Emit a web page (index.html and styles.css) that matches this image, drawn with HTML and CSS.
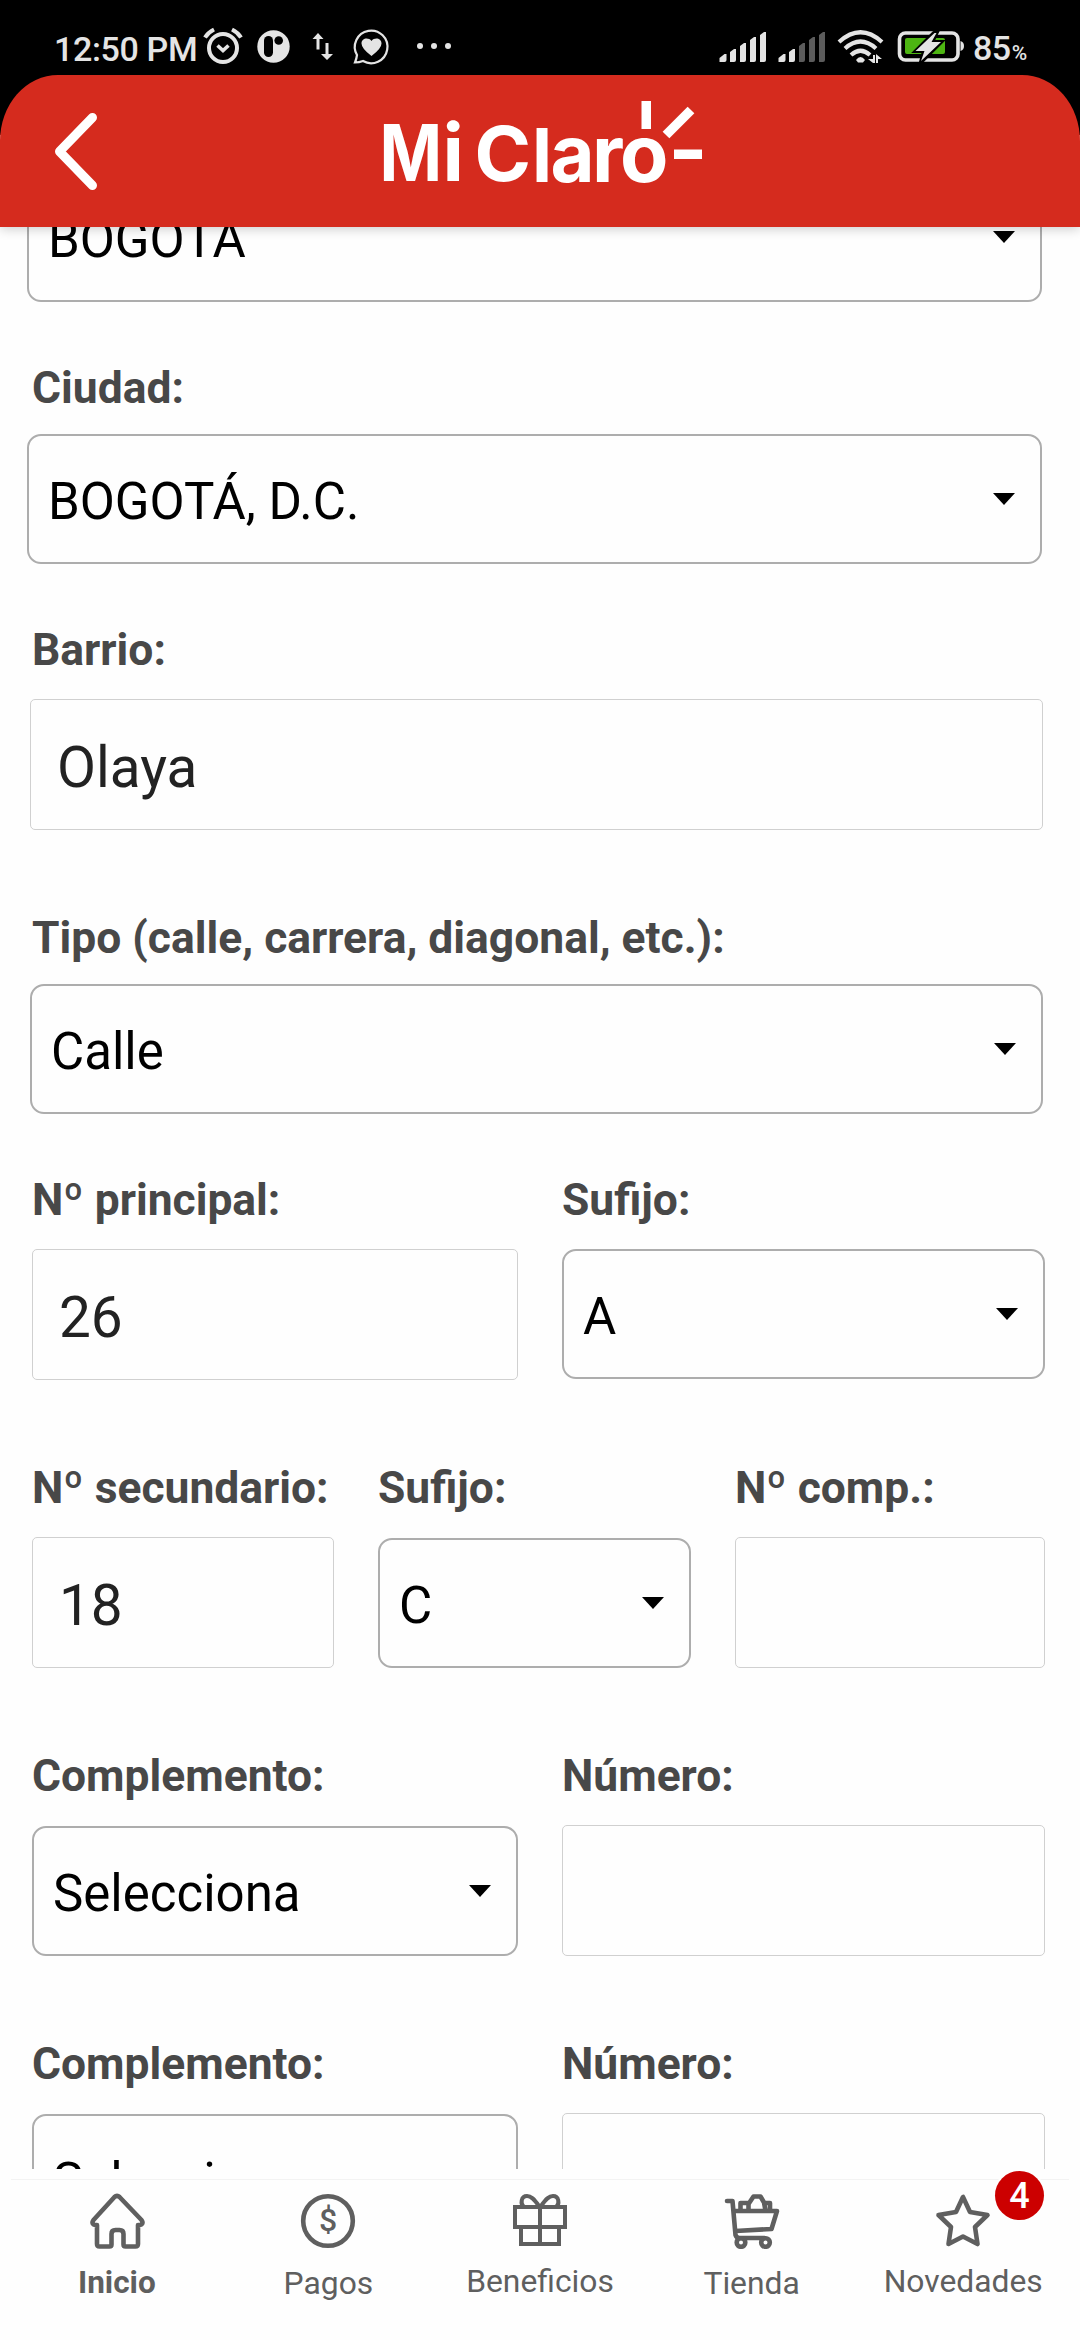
FILE: index.html
```html
<!DOCTYPE html>
<html lang="es">
<head>
<meta charset="utf-8">
<title>Mi Claro</title>
<link rel="stylesheet" href="styles.css">
</head>
<body>
<div class="status">
  <span class="clock">12:50 PM</span>
  <svg class="s-icons" width="260" height="75" viewBox="200 0 260 75" fill="none" stroke="#e4e4e4">
    <circle cx="223" cy="48" r="14" stroke-width="4"/>
    <path d="M217.500 45.500l5.500 5 5.500-5" stroke-width="3.600"/>
    <path d="M205 37.500q3-5 9-8M241 37.500q-3-5-9-8" stroke-width="4"/>
    <ellipse cx="273.500" cy="46.500" rx="16.200" ry="16.300" fill="#e4e4e4" stroke="none"/>
    <rect x="264" y="36" width="9" height="21" rx="4.500" fill="#000" stroke="none"/>
    <circle cx="278.700" cy="40.500" r="4.300" fill="#000" stroke="none"/>
    <path d="M319.500 49.500h-3V39h-4l5.500-6 5.500 6h-4zM325.500 43h3v11h4.500l-6 6-6-6h4.500z" fill="#e4e4e4" stroke="none"/>
    <path d="M357 55a16.300 16.300 0 1 1 6 6q-4 1.500-8 1.500 1.500-3.500 2-7.500z" stroke-width="2.200"/>
    <path d="M371.500 56q-10-7.500-10-12.500c0-5.500 7-6.500 10-2.500 3-4 10-3 10 2.500q0 5-10 12.500z" fill="#e4e4e4" stroke="none"/>
    <g fill="#e4e4e4" stroke="none"><circle cx="420" cy="46" r="3"/><circle cx="434" cy="46" r="3"/><circle cx="448" cy="46" r="3"/></g>
  </svg>
  <svg class="s-right" width="250" height="75" viewBox="718 0 250 75" fill="#e4e4e4">
    <path d="M719.500 62v-4l5-4h2v6q0 2-2 2zM730 62V52l4-3h2v11q0 2-2 2zM740 62V46l4-3h2v17q0 2-2 2zM750 62V40l4-3h2v23q0 2-2 2zM760 62V35l4-3h2v28q0 2-2 2z"/>
    <path d="M778.500 62v-4l5-4h2v6q0 2-2 2zM789 62V52l4-3h2v11q0 2-2 2z"/>
    <path fill="#5c5c5c" d="M799 62V46l4-3h2v17q0 2-2 2zM809 62V40l4-3h2v23q0 2-2 2zM819 62V35l4-3h2v28q0 2-2 2z"/>
    <g fill="none" stroke="#e4e4e4" stroke-width="4.200"><path d="M839 42q21.500-19.500 43 0"/><path d="M845 48.500q15.500-14 31 0"/><path d="M851 55q9.500-8.500 19 0"/></g>
    <path d="M856 60q4.500-6 9 0l-2 2.500h-5z"/>
    <path d="M873 55h2v8h-2l-5-4h5zM878 63h-2v-9l6 5h-4z"/>
    <rect x="899.500" y="33" width="58.500" height="27" rx="6" fill="none" stroke="#e4e4e4" stroke-width="3.600"/>
    <rect x="905" y="38" width="40" height="16" rx="2" fill="#4db512"/>
    <path d="M960.500 41q3.500 1 3.500 5t-3.500 5z"/>
    <path d="M934 33l-18 18h8l-3 11 20-20h-9l5-10z" stroke="#000" stroke-width="4"/>
    <path d="M934.500 33l-19 18h9l-3.500 10 20-19h-9.500l5-9z"/>
  </svg>
  <span class="battery">85<small>%</small></span>
</div>
<header class="header">
  <svg class="back" width="60" height="100" viewBox="46 101 60 100"><path d="M92.500 117.500L59.500 151.500l33 34" fill="none" stroke="#fff" stroke-width="9" stroke-linecap="round" stroke-linejoin="round"/></svg>
  <svg class="logo" width="330" height="120" viewBox="378 97 330 120" fill="#fff">
    <g class="logo-text">
      <text class="mi" transform="translate(379.500 180.500) scale(.850 1)">M</text>
      <text class="mi" x="442.500" y="180.500">i</text>
      <text transform="translate(474.500 181) scale(1.020 1)" font-size="75">C</text>
      <text x="532" y="181.500" font-size="74">l</text>
      <text transform="translate(550.500 181.500) scale(.960 1)" font-size="79">a</text>
      <text x="592" y="181.500" font-size="79">r</text>
      <text transform="translate(620 181.500)" font-size="79">o</text>
    </g>
    <path d="M641.500 101h9.500v28h-9.500zM674 149.500h28v9.500h-28z"/>
    <path d="M666 135l25-25" stroke="#fff" stroke-width="9.500"/>
  </svg>
</header>
<main class="form">
  <section class="row first"><div class="select">BOGOTA</div></section>
  <section class="row city"><div class="field"><label>Ciudad:</label><div class="select">BOGOTÁ, D.C.</div></div></section>
  <section class="row hood"><div class="field"><label>Barrio:</label><div class="input">Olaya</div></div></section>
  <section class="row type"><div class="field"><label>Tipo (calle, carrera, diagonal, etc.):</label><div class="select">Calle</div></div></section>
  <section class="row main-no">
    <div class="field"><label>Nº principal:</label><div class="input">26</div></div>
    <div class="field"><label>Sufijo:</label><div class="select">A</div></div>
  </section>
  <section class="row thirds">
    <div class="field"><label>Nº secundario:</label><div class="input">18</div></div>
    <div class="field"><label>Sufijo:</label><div class="select">C</div></div>
    <div class="field"><label>Nº comp.:</label><div class="input"></div></div>
  </section>
  <section class="row extra">
    <div class="field"><label>Complemento:</label><div class="select">Selecciona</div></div>
    <div class="field"><label>Número:</label><div class="input"></div></div>
  </section>
  <section class="row extra">
    <div class="field"><label>Complemento:</label><div class="select">Selecciona</div></div>
    <div class="field"><label>Número:</label><div class="input"></div></div>
  </section>
</main>
<nav class="tabs">
  <a class="tab active">
    <svg width="56" height="56" viewBox="0 0 56 56"><path d="M25.500 4q2.500-2.500 5 0L52.500 27c2 3 1 5-3 5H49v19q0 2.500-2.500 2.500h-10q-2 0-2-2V41q0-4-4-4h-4q-4 0-4 4v10.500q0 2-2 2h-10Q8 53.500 8 51V32h-.500c-4 0-5-2-3-5z"/></svg>
    <span>Inicio</span>
  </a>
  <a class="tab">
    <svg width="56" height="56" viewBox="0 0 56 56"><circle cx="28" cy="28" r="24.800"/><text class="dollar" x="28" y="38">$</text></svg>
    <span>Pagos</span>
  </a>
  <a class="tab raised">
    <svg class="thin" width="56" height="56" viewBox="0 0 56 56"><path d="M3 14h50v20H3zM9 34h38v17H9zM28 14v37M27 13C22 6 19 3 15 3c-6 0-7 8-3 11M29 13C34 6 37 3 41 3c6 0 7 8 3 11"/></svg>
    <span>Beneficios</span>
  </a>
  <a class="tab">
    <svg width="56" height="56" viewBox="0 0 56 56"><path d="M3 8h5.500l3 34q1 3 4 3h25M10.500 18H53l-5.500 18-36 2M16.500 17v-7h8M24.500 17v-6l5-7.500h7l3.500 6 1.500 8M40 10h6v7"/><circle cx="17" cy="49.500" r="4.300"/><circle cx="41.500" cy="49.500" r="4.300"/></svg>
    <span>Tienda</span>
  </a>
  <a class="tab raised">
    <svg width="56" height="56" viewBox="0 0 56 56"><path d="M28 4l-7 15-17.500 3L16 34l-2.500 17L28 43.500 42.500 51 40 34l12.500-12L35 19z"/></svg>
    <span>Novedades</span>
    <b class="badge">4</b>
  </a>
</nav>
</body>
</html>
```
FILE: styles.css
```css
* { box-sizing: border-box; }

body {
  margin: 0;
  width: 1080px;
  height: 2340px;
  overflow: hidden;
  background: #fefefe;
  font-family: Roboto, "Liberation Sans", sans-serif;
  display: flex;
  flex-direction: column;
}

.status {
  height: 135px;
  margin-bottom: -60px;
  flex: none;
  background: #000;
  color: #e4e4e4;
  display: flex;
  align-items: flex-start;
  padding-left: 54px;
  font-size: 34px;
  line-height: 40px;
  white-space: nowrap;
}
.status svg { flex: none; display: block; }
.clock { width: 146px; padding-top: 29px; font-weight: 500; letter-spacing: -.35px; }
.s-right { margin-left: 258px; }
.battery { padding: 28px 0 0 5px; font-weight: 500; letter-spacing: -.5px; }
.battery small { font-size: 21px; margin-left: 1px; }

.header {
  position: relative;
  flex: none;
  height: 152px;
  background: #d52b1e;
  border-radius: 58px 58px 0 0 / 66px 66px 0 0;
  box-shadow: 0 2px 12px rgba(0, 0, 0, .2);
  clip-path: inset(0 0 -20px 0);
  display: flex;
  align-items: flex-start;
  padding: 22px 0 0 46px;
  z-index: 1;
}
.back { margin-top: 4px; }
.logo { margin-left: 272px; overflow: visible; }
.logo-text { font-family: Inter, "Liberation Sans", sans-serif; font-weight: 700; }
.logo-text .mi { font-size: 79px; }

.form {
  flex: none;
  height: 1942px;
  overflow: hidden;
}
.row { display: flex; gap: 44px; padding: 60px 35px 0 32px; }
.row.first { margin-top: -55px; padding: 0 38px 0 27px; }
.row.first .select { flex: 1; }
.row.city { padding-right: 38px; padding-left: 27px; }
.row.city label { margin-left: 5px; }
.row.hood, .row.type { padding-left: 30px; padding-right: 37px; }
.row.hood label, .row.type label { margin-left: 2px; }
.row.type, .row.thirds, .row.extra { padding-top: 82px; }

.field { flex: 1; min-width: 0; display: flex; flex-direction: column; }
.main-no .field:first-child, .extra .field:first-child { flex: 0 0 486px; }
.thirds .field:nth-child(1) { flex: 0 0 302px; }
.thirds .field:nth-child(2) { flex: 0 0 313px; }

label {
  height: 52px;
  line-height: 52px;
  font-size: 44.400px;
  font-weight: 700;
  color: #484848;
  white-space: nowrap;
}
.input, .select { white-space: nowrap; background: #fefefe; }
.input {
  height: 131px;
  margin-top: 23px;
  border: 1px solid #d0d0d0;
  border-radius: 5px;
  padding-left: 26px;
  font-size: 56.700px;
  line-height: 136px;
  color: #222;
}
.select {
  height: 130px;
  margin-top: 20px;
  border: 2px solid #adadad;
  border-radius: 14px;
  padding: 0 25px 0 19px;
  font-size: 51px;
  line-height: 131px;
  color: #000;
  display: flex;
  justify-content: space-between;
}
.select::after {
  content: "";
  width: 22px;
  height: 12px;
  margin-top: 57px;
  background: #000;
  clip-path: polygon(0 0, 100% 0, 50% 100%);
}
.first .select { margin-top: 0; }
.main-no .select { margin-top: 23px; }
.thirds .select, .extra .select { margin-top: 24px; }

.tabs {
  flex: none;
  height: 161px;
  margin: 10px 11px 0;
  border-top: 1px solid #f3f3f3;
  display: grid;
  grid-template-columns: repeat(5, 1fr);
  color: #5f5f5f;
}
.tab {
  position: relative;
  display: flex;
  flex-direction: column;
  align-items: center;
  padding-top: 13px;
  font-size: 31.800px;
  line-height: 38px;
}
.tab svg { fill: none; stroke: #5f5f5f; stroke-width: 4.600; stroke-linejoin: round; stroke-linecap: round; }
.tab .thin { stroke-width: 4; stroke-linejoin: miter; }
.tab span { margin-top: 15px; }
.raised span { margin-top: 13px; }
.active { font-weight: 700; }
.active span { font-size: 31.500px; }
.tab .dollar { fill: #5f5f5f; stroke: none; font-size: 32px; font-weight: 500; text-anchor: middle; }
.badge {
  position: absolute;
  top: -9px;
  right: 25px;
  width: 49px;
  height: 49px;
  border-radius: 50%;
  background: #c00;
  box-shadow: 0 0 0 2px #fefefe;
  color: #fff;
  font-size: 36px;
  font-weight: 500;
  line-height: 50px;
  text-align: center;
}
```
